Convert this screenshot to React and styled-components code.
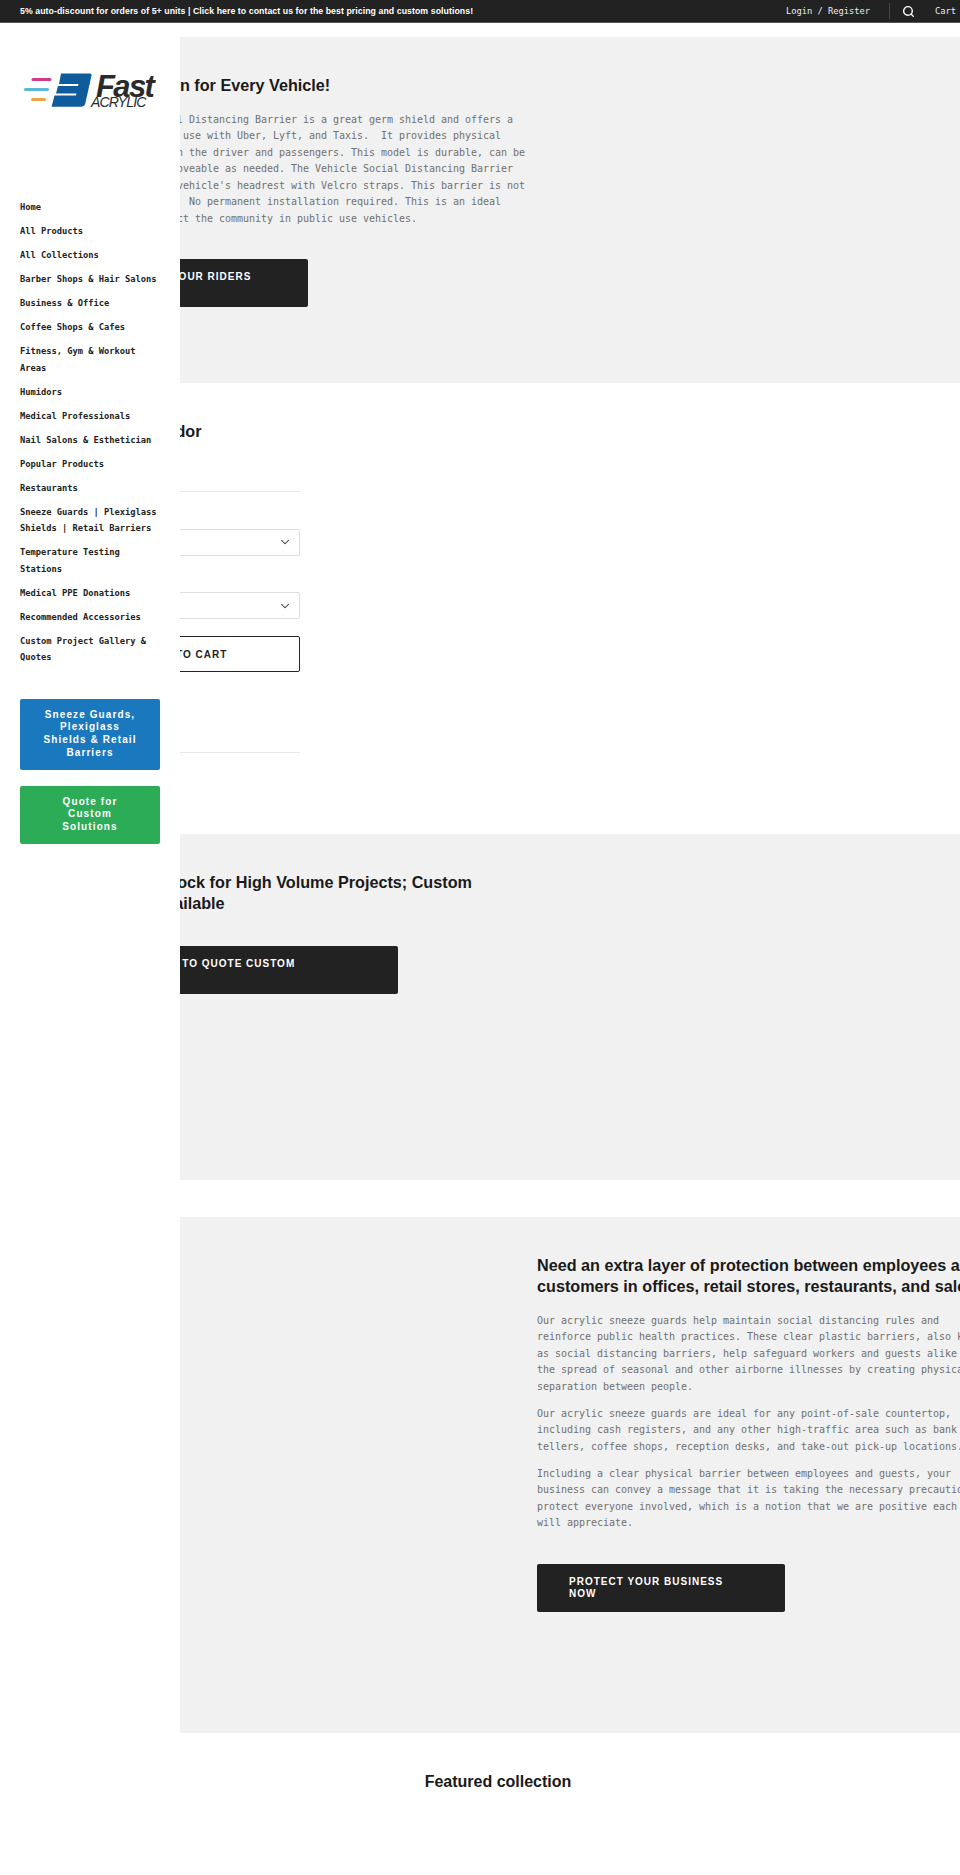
import React from "react";
import styled, { createGlobalStyle } from "styled-components";
import { ChevronDown, Search } from "lucide-react";

const GlobalStyle = createGlobalStyle`
  html, body {
    margin: 0;
    padding: 0;
    background: #fff;
    overflow-x: hidden;
  }
  body {
    font-family: "DejaVu Sans Mono", monospace;
    color: #666;
  }
  * {
    box-sizing: border-box;
  }
`;

const navItems = [
  "Home",
  "All Products",
  "All Collections",
  "Barber Shops & Hair Salons",
  "Business & Office",
  "Coffee Shops & Cafes",
  "Fitness, Gym & Workout Areas",
  "Humidors",
  "Medical Professionals",
  "Nail Salons & Esthetician",
  "Popular Products",
  "Restaurants",
  "Sneeze Guards | Plexiglass Shields | Retail Barriers",
  "Temperature Testing Stations",
  "Medical PPE Donations",
  "Recommended Accessories",
  "Custom Project Gallery & Quotes",
];

const Logo = () => (
  <svg width="132" height="35" viewBox="0 0 132 35">
    <rect x="7.5" y="5" width="20" height="3" rx="1.5" fill="#cf3a8c" />
    <rect x="0" y="15" width="25" height="3" rx="1.5" fill="#5bb7dc" />
    <rect x="7" y="25" width="15" height="3" rx="1.5" fill="#eea344" />
    <path
      d="M37 .5 H66 Q68 .5 67.4 3 L61.4 30 Q60.6 33.8 57 33.8 H27.6 L30.5 22.5 H52 L52.5 20.5 H32 L34 13 H54 L54.5 11 H35 Z"
      fill="#0f5c9c"
    />
    <text x="72" y="24" fontFamily="Liberation Sans" fontSize="31" fontStyle="italic" fontWeight="700" letterSpacing="-1.6" fill="#2a2a2a">
      Fast
    </text>
    <text x="67" y="34" fontFamily="Liberation Sans" fontSize="14" fontStyle="italic" letterSpacing="-0.8" fill="#2a2a2a">
      ACRYLIC
    </text>
  </svg>
);

const App = () => {
  return (
    <Page>
      <GlobalStyle />
      <TopBar>
        <Promo>5% auto-discount for orders of 5+ units | Click here to contact us for the best pricing and custom solutions!</Promo>
        <TopLinks>
          <TopLink>Login / Register</TopLink>
          <TopDivider />
          <SearchButton>
            <Search size={13} strokeWidth={2.6} />
          </SearchButton>
          <TopLink>Cart</TopLink>
        </TopLinks>
      </TopBar>

      <Shell>
        <Sidebar>
          <LogoLink>
            <Logo />
          </LogoLink>
          <NavList>
            {navItems.map((item) => (
              <NavItem key={item}>{item}</NavItem>
            ))}
          </NavList>
          <SideButton $bg="#1a78be">Sneeze Guards, Plexiglass Shields &amp; Retail Barriers</SideButton>
          <SideButton $bg="#2dac58">Quote for Custom Solutions</SideButton>
        </Sidebar>

        <Main>
          <Banner $height={346}>
            <Column>
              <Heading>Great Protection for Every Vehicle!</Heading>
              <Copy>
                Clear Vehicle Social Distancing Barrier is a great germ shield and offers a<br />
                protection made for use with Uber, Lyft, and Taxis.{"\u00a0\u00a0"}It provides physical<br />
                a barrier in between the driver and passengers. This model is durable, can be<br />
                easily cleaned, removeable as needed. The Vehicle Social Distancing Barrier<br />
                mounts easily to a vehicle's headrest with Velcro straps. This barrier is not<br />
                for use in any car.{"\u00a0\u00a0"}No permanent installation required. This is an ideal<br />
                means to help protect the community in public use vehicles.
              </Copy>
              <DarkButton $width={245}>Safeguard your riders now</DarkButton>
            </Column>
          </Banner>

          <Product>
            <Heading>Plexiglass Vendor</Heading>
            <Rule $top={49} />
            <FieldLabel>Size</FieldLabel>
            <Select>
              <span>Standard</span>
              <ChevronDown size={14} strokeWidth={1.8} />
            </Select>
            <FieldLabel>Quantity</FieldLabel>
            <Select>
              <span>1</span>
              <ChevronDown size={14} strokeWidth={1.8} />
            </Select>
            <CartButton>Add to cart</CartButton>
            <Rule $top={80} />
          </Product>

          <Banner $height={346}>
            <Column>
              <Heading>
                Partitions In Stock for High Volume Projects; Custom<br />
                Fabrication Available
              </Heading>
              <DarkButton $width={335}>Get in touch to quote custom solutions</DarkButton>
            </Column>
          </Banner>

          <Banner $height={516} $gap={37}>
            <Column />
            <Column>
              <Heading>
                Need an extra layer of protection between employees and<br />
                customers in offices, retail stores, restaurants, and sales floors?
              </Heading>
              <Copy>
                Our acrylic sneeze guards help maintain social distancing rules and<br />
                reinforce public health practices. These clear plastic barriers, also known<br />
                as social distancing barriers, help safeguard workers and guests alike against<br />
                the spread of seasonal and other airborne illnesses by creating physical<br />
                separation between people.
              </Copy>
              <Copy $gap={10.5}>
                Our acrylic sneeze guards are ideal for any point-of-sale countertop,<br />
                including cash registers, and any other high-traffic area such as bank<br />
                tellers, coffee shops, reception desks, and take-out pick-up locations.
              </Copy>
              <Copy $gap={10.5}>
                Including a clear physical barrier between employees and guests, your<br />
                business can convey a message that it is taking the necessary precautions to<br />
                protect everyone involved, which is a notion that we are positive each guest<br />
                will appreciate.
              </Copy>
              <DarkButton $width={248}>Protect your business now</DarkButton>
            </Column>
          </Banner>

          <Featured>Featured collection</Featured>
        </Main>
      </Shell>
    </Page>
  );
};

const Page = styled.div`
  width: 100%;
  min-height: 1875px;
  overflow: hidden;
`;

const TopBar = styled.header`
  height: 23px;
  background: #222;
  border-bottom: 1px solid #555;
  display: flex;
  align-items: center;
  justify-content: space-between;
  padding: 0 4px 0 20px;
`;

const Promo = styled.span`
  font-family: "Liberation Sans", Arial, sans-serif;
  font-size: 8.75px;
  font-weight: 700;
  letter-spacing: 0.06px;
  color: #fff;
`;

const TopLinks = styled.div`
  display: flex;
  align-items: center;
`;

const TopLink = styled.span`
  font-size: 8.75px;
  letter-spacing: -0.02px;
  color: #eee;
`;

const TopDivider = styled.span`
  width: 1px;
  height: 16px;
  background: #444;
  margin-left: 19px;
`;

const SearchButton = styled.span`
  display: flex;
  color: #fff;
  margin: 0 20px 0 12px;
`;

const Shell = styled.div`
  position: relative;
`;

const Sidebar = styled.aside`
  position: absolute;
  top: 0;
  left: 0;
  bottom: 0;
  width: 180px;
  background: #fff;
  padding: 50px 20px 0;
  z-index: 2;
`;

const LogoLink = styled.div`
  display: flex;
  padding-left: 4px;
  height: 35px;
`;

const NavList = styled.ul`
  list-style: none;
  margin: 91px 0 0;
  padding: 0;
  display: flex;
  flex-direction: column;
  gap: 7.5px;
`;

const NavItem = styled.li`
  font-size: 8.75px;
  font-weight: 700;
  line-height: 16.5px;
  letter-spacing: -0.02px;
  color: #222;
`;

const SideButton = styled.div`
  margin-top: 16px;
  padding: 10px 22px;
  background: ${(props) => props.$bg};
  border-radius: 2px;
  font-family: "Liberation Sans", Arial, sans-serif;
  font-size: 10px;
  font-weight: 700;
  line-height: 12.8px;
  letter-spacing: 1.1px;
  text-align: center;
  color: #fff;

  ul + & {
    margin-top: 33px;
  }
`;

const Main = styled.main`
  width: 996px;
  padding-top: 14px;
`;

const Banner = styled.section`
  display: grid;
  grid-template-columns: 474px 474px;
  height: ${(props) => props.$height}px;
  margin-top: ${(props) => props.$gap || 0}px;
  padding: 38px 0 0 63px;
  background: #f1f1f1;
`;

const Column = styled.div`
  min-width: 0;
`;

const Heading = styled.h2`
  margin: 0;
  font-family: "Liberation Sans", Arial, sans-serif;
  font-size: 16.2px;
  font-weight: 700;
  line-height: 21px;
  white-space: nowrap;
  color: #1a1a1a;
`;

const Copy = styled.p`
  margin: ${(props) => props.$gap || 15.5}px 0 0;
  font-size: 10px;
  line-height: 16.5px;
  letter-spacing: -0.02px;
  color: #707070;
  white-space: nowrap;
`;

const DarkButton = styled.div`
  width: ${(props) => props.$width}px;
  height: 48px;
  margin-top: 32px;
  padding: 12px 32px;
  background: #222;
  border-radius: 2px;
  font-family: "Liberation Sans", Arial, sans-serif;
  font-size: 10px;
  font-weight: 700;
  line-height: 12.8px;
  letter-spacing: 1px;
  text-transform: uppercase;
  color: #fff;
`;

const Product = styled.section`
  height: 451px;
  padding: 38px 0 0 63px;
`;

const Rule = styled.div`
  width: 237px;
  height: 1px;
  margin-top: ${(props) => props.$top}px;
  background: #e8e8e8;
`;

const FieldLabel = styled.div`
  font-size: 8.75px;
  line-height: 16.5px;
  margin-top: 20px;
  color: #222;
`;

const Select = styled.div`
  width: 237px;
  height: 27px;
  display: flex;
  align-items: center;
  justify-content: space-between;
  padding: 0 7px;
  border: 1px solid #ddd;
  border-radius: 2px;
  background: #fff;
  font-size: 10px;
  color: #333;
`;

const CartButton = styled.div`
  width: 237px;
  height: 36px;
  margin-top: 17px;
  padding-left: 12px;
  display: flex;
  align-items: center;
  justify-content: center;
  border: 1px solid #222;
  border-radius: 2px;
  font-family: "Liberation Sans", Arial, sans-serif;
  font-size: 10px;
  font-weight: 700;
  letter-spacing: 1px;
  text-transform: uppercase;
  color: #222;
`;

const Featured = styled.h2`
  margin: 38px 0 0;
  font-family: "Liberation Sans", Arial, sans-serif;
  font-size: 16px;
  font-weight: 700;
  line-height: 21px;
  text-align: center;
  color: #1a1a1a;
`;

export default App;
